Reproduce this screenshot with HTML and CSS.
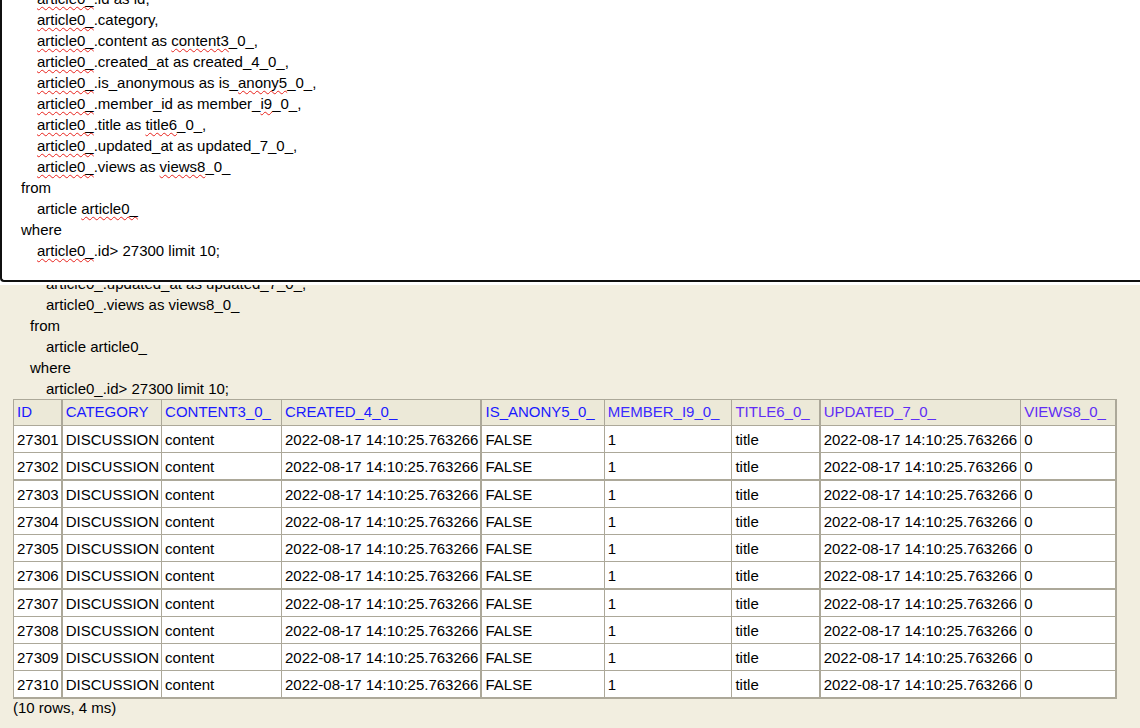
FILE: index.html
```
<!DOCTYPE html>
<html>
<head>
<meta charset="utf-8">
<link rel="stylesheet" href="styles.css">
</head>
<body>
<div class="query-frame">
  <div class="editor">
    <div class="lines">
      <div class="ind"><span class="sp">article0_</span>.id as id,</div>
      <div class="ind"><span class="sp">article0_</span>.category,</div>
      <div class="ind"><span class="sp">article0_</span>.content as <span class="sp">content3</span>_0_,</div>
      <div class="ind"><span class="sp">article0_</span>.created_at as created_4_0_,</div>
      <div class="ind"><span class="sp">article0_</span>.is_anonymous as is_<span class="sp">anony5</span>_0_,</div>
      <div class="ind"><span class="sp">article0_</span>.member_id as member_<span class="sp">i9</span>_0_,</div>
      <div class="ind"><span class="sp">article0_</span>.title as <span class="sp">title6</span>_0_,</div>
      <div class="ind"><span class="sp">article0_</span>.updated_at as updated_7_0_,</div>
      <div class="ind"><span class="sp">article0_</span>.views as <span class="sp">views8</span>_0_</div>
      <div class="kw">from</div>
      <div class="ind">article <span class="sp">article0_</span></div>
      <div class="kw">where</div>
      <div class="ind"><span class="sp">article0_</span>.id&gt; 27300 limit 10;</div>
    </div>
  </div>
</div>
<div class="result-frame">
  <div class="echo">
    <div class="ind">article0_.updated_at as updated_7_0_,</div>
    <div class="ind">article0_.views as views8_0_</div>
    <div class="kw">from</div>
    <div class="ind">article article0_</div>
    <div class="kw">where</div>
    <div class="ind">article0_.id&gt; 27300 limit 10;</div>
  </div>
  <table class="result">
    <thead>
      <tr>
        <th><a>ID</a></th>
        <th class="sep"><a>CATEGORY</a></th>
        <th class="n10"><a>CONTENT3_0_</a></th>
        <th><a>CREATED_4_0_</a></th>
        <th class="sep n9"><a>IS_ANONY5_0_</a></th>
        <th class="n12"><a class="v1">MEMBER_I9_0_</a></th>
        <th class="n9"><a class="v2">TITLE6_0_</a></th>
        <th class="sep"><a class="v2">UPDATED_7_0_</a></th>
        <th class="n9"><a class="v2">VIEWS8_0_</a></th>
      </tr>
    </thead>
    <tbody>
      <tr><td>27301</td><td class="sep">DISCUSSION</td><td>content</td><td>2022-08-17 14:10:25.763266</td><td class="sep">FALSE</td><td>1</td><td>title</td><td class="sep wide">2022-08-17 14:10:25.763266</td><td>0</td></tr>
      <tr><td>27302</td><td class="sep">DISCUSSION</td><td>content</td><td>2022-08-17 14:10:25.763266</td><td class="sep">FALSE</td><td>1</td><td>title</td><td class="sep wide">2022-08-17 14:10:25.763266</td><td>0</td></tr>
      <tr class="thick"><td>27303</td><td class="sep">DISCUSSION</td><td>content</td><td>2022-08-17 14:10:25.763266</td><td class="sep">FALSE</td><td>1</td><td>title</td><td class="sep wide">2022-08-17 14:10:25.763266</td><td>0</td></tr>
      <tr><td>27304</td><td class="sep">DISCUSSION</td><td>content</td><td>2022-08-17 14:10:25.763266</td><td class="sep">FALSE</td><td>1</td><td>title</td><td class="sep wide">2022-08-17 14:10:25.763266</td><td>0</td></tr>
      <tr><td>27305</td><td class="sep">DISCUSSION</td><td>content</td><td>2022-08-17 14:10:25.763266</td><td class="sep">FALSE</td><td>1</td><td>title</td><td class="sep wide">2022-08-17 14:10:25.763266</td><td>0</td></tr>
      <tr><td>27306</td><td class="sep">DISCUSSION</td><td>content</td><td>2022-08-17 14:10:25.763266</td><td class="sep">FALSE</td><td>1</td><td>title</td><td class="sep wide">2022-08-17 14:10:25.763266</td><td>0</td></tr>
      <tr class="thick"><td>27307</td><td class="sep">DISCUSSION</td><td>content</td><td>2022-08-17 14:10:25.763266</td><td class="sep">FALSE</td><td>1</td><td>title</td><td class="sep wide">2022-08-17 14:10:25.763266</td><td>0</td></tr>
      <tr><td>27308</td><td class="sep">DISCUSSION</td><td>content</td><td>2022-08-17 14:10:25.763266</td><td class="sep">FALSE</td><td>1</td><td>title</td><td class="sep wide">2022-08-17 14:10:25.763266</td><td>0</td></tr>
      <tr><td>27309</td><td class="sep">DISCUSSION</td><td>content</td><td>2022-08-17 14:10:25.763266</td><td class="sep">FALSE</td><td>1</td><td>title</td><td class="sep wide">2022-08-17 14:10:25.763266</td><td>0</td></tr>
      <tr><td>27310</td><td class="sep">DISCUSSION</td><td>content</td><td>2022-08-17 14:10:25.763266</td><td class="sep">FALSE</td><td>1</td><td>title</td><td class="sep wide">2022-08-17 14:10:25.763266</td><td>0</td></tr>
    </tbody>
  </table>
  <div class="status">(10 rows, 4 ms)</div>
</div>
</body>
</html>
```
FILE: styles.css
```
html, body {
  margin: 0;
  padding: 0;
}
body {
  width: 1140px;
  height: 728px;
  overflow: hidden;
  font-family: "Liberation Sans", Arial, sans-serif;
  font-size: 15px;
  color: #000;
  background: #fff;
}
.query-frame {
  height: 285px;
  overflow: hidden;
  background: #fff;
}
.editor {
  box-sizing: border-box;
  height: 282px;
  width: 1160px;
  border-left: 2px solid #101010;
  border-bottom: 2px solid #101010;
  border-bottom-left-radius: 4px;
  overflow: hidden;
  background: #fff;
}
.lines {
  margin-top: -12px;
  line-height: 21px;
  white-space: nowrap;
}
.lines .kw { padding-left: 19px; }
.lines .ind { padding-left: 35px; }
.sp {
  text-decoration: underline wavy #e8221c;
  text-decoration-thickness: 1px;
  text-underline-offset: 2px;
  text-decoration-skip-ink: none;
}
.result-frame {
  height: 443px;
  overflow: hidden;
  background: #f2eee0;
  padding-left: 13px;
}
.echo {
  margin-top: -12px;
  line-height: 21px;
  white-space: nowrap;
}
.echo .kw { padding-left: 17px; }
.echo .ind { padding-left: 33px; }
.result {
  border-collapse: collapse;
  border-left: 1px solid #aca899;
  border-top: 1px solid #aca899;
  border-right: 2px solid #aca899;
  border-bottom: 2px solid #aca899;
  line-height: 17px;
  white-space: nowrap;
}
.result th, .result td {
  border: 1px solid #aca899;
  text-align: left;
  font-weight: normal;
  vertical-align: top;
}
.result th {
  background: #ece9d8;
  padding: 3px 11px 5px 3px;
}
.result th.n9 { padding-right: 9px; }
.result th.n10 { padding-right: 10px; }
.result th.n12 { padding-right: 12px; }
.result td {
  background: #fff;
  padding: 4.5px 2px 4.5px 3px;
}
.result td.wide { padding-right: 3px; }
.result .sep {
  border-left-width: 2px;
}
.result tr.thick td {
  border-top-width: 2px;
}
.result th a {
  color: #1a1aff;
  text-decoration: none;
}
.result th a.v1 { color: #3a2aff; }
.result th a.v2 { color: #5f2df5; }
.status {
  line-height: 17px;
}
```
